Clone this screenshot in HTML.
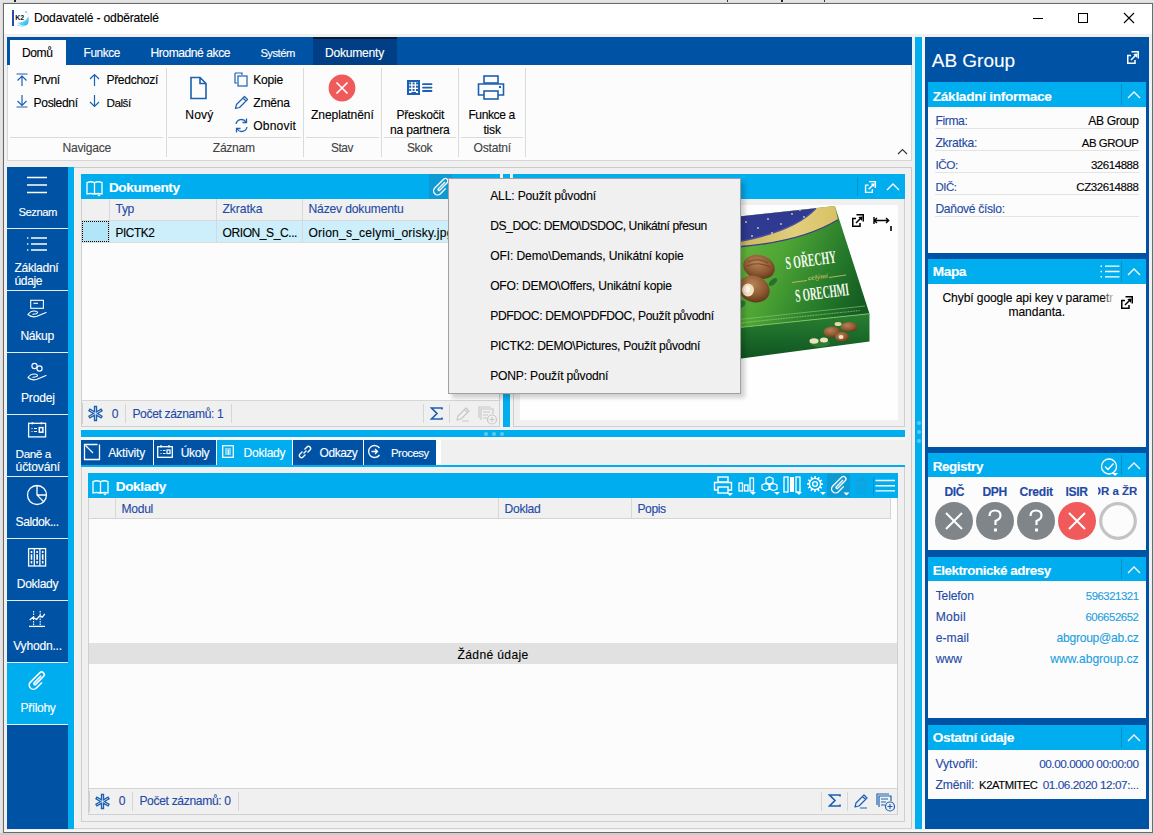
<!DOCTYPE html>
<html><head><meta charset="utf-8">
<style>
html,body{margin:0;padding:0;}
body{width:1154px;height:835px;position:relative;overflow:hidden;background:#e6e6e6;font-family:"Liberation Sans",sans-serif;}
body>div{position:absolute;}
.t{position:absolute;white-space:nowrap;-webkit-text-stroke:0.12px currentColor;}
</style></head><body>
<div style="left:0px;top:0px;width:1154px;height:835px;background:#e4e4e4;"></div>
<div style="left:14px;top:0px;width:2px;height:2px;background:#222;"></div>
<div style="left:727px;top:0px;width:1px;height:2px;background:#333;"></div>
<div style="left:781px;top:0px;width:2px;height:2px;background:#222;"></div>
<div style="left:824px;top:0px;width:1px;height:2px;background:#333;"></div>
<div style="left:2px;top:2px;width:1152px;height:832px;background:#dadada;"></div>
<div style="left:3px;top:3px;width:1150px;height:830px;background:#6a6a6a;"></div>
<div style="left:4px;top:4px;width:1148px;height:828px;background:#f0f0f0;"></div>
<div style="left:4px;top:4px;width:1148px;height:30px;background:#ffffff;"></div>
<div style="left:12px;top:10px;width:2px;height:16px;background:#1f4fa8;"></div>
<svg style="position:absolute;left:14px;top:9px;" width="16" height="18" viewBox="0 0 16 18"><defs><linearGradient id="k2g" x1="0" y1="0" x2="1" y2="1"><stop offset="0" stop-color="#e8f7fd"/><stop offset="0.6" stop-color="#5fd0f2"/><stop offset="1" stop-color="#1aa3e6"/></linearGradient></defs><path d="M3.5 14 Q9 18.5 13.5 15.5 Q15.5 12.5 14.2 7 Q12.5 11.5 9 12.5 Q6 13.2 3.5 14Z" fill="url(#k2g)"/><path d="M3 16 Q8 18 12 16.5" stroke="#8fdcf5" stroke-width="1" fill="none"/><text x="1.3" y="11.3" font-family="Liberation Sans" font-weight="bold" font-size="7" fill="#111">K2</text><circle cx="12" cy="3" r="0.9" fill="#6cc8f0"/><circle cx="13.5" cy="5" r="0.6" fill="#9cd8f5"/></svg>
<div class="t" style="left:34.00px;top:12px;font-size:12.10px;line-height:12.10px;color:#000;font-weight:normal;letter-spacing:-0.183px;">Dodavatelé - odběratelé</div>
<div style="left:1033px;top:18px;width:10px;height:1px;background:#000;"></div>
<div style="left:1078px;top:13px;width:10px;height:10px;background:transparent;border:1px solid #000;box-sizing:border-box;"></div>
<svg style="position:absolute;left:1123px;top:12px;" width="12" height="12" viewBox="0 0 12 12"><path d="M1 1 L11 11 M11 1 L1 11" stroke="#000" stroke-width="1.1"/></svg>
<div style="left:7px;top:37px;width:905px;height:28px;background:#0052a4;"></div>
<div style="left:7px;top:65px;width:905px;height:96px;background:#fcfcfc;border:1px solid #d6d6d6;border-top:none;box-sizing:border-box;"></div>
<div style="left:10px;top:40px;width:56px;height:26px;background:#fcfcfc;"></div>
<div class="t" style="left:22.00px;top:47px;font-size:12.10px;line-height:12.10px;color:#000;font-weight:normal;letter-spacing:-0.438px;">Domů</div>
<div class="t" style="left:83.60px;top:48px;font-size:11.86px;line-height:11.86px;color:#fff;font-weight:normal;letter-spacing:-0.451px;">Funkce</div>
<div class="t" style="left:150.50px;top:47px;font-size:12.10px;line-height:12.10px;color:#fff;font-weight:normal;letter-spacing:-0.448px;">Hromadné akce</div>
<div class="t" style="left:260.40px;top:48px;font-size:11.27px;line-height:11.27px;color:#fff;font-weight:normal;letter-spacing:-0.530px;">Systém</div>
<div style="left:313px;top:37px;width:84px;height:28px;background:#003f86;"></div>
<div style="left:313px;top:37px;width:84px;height:2px;background:#0a1a33;"></div>
<div class="t" style="left:325.00px;top:47px;font-size:12.10px;line-height:12.10px;color:#fff;font-weight:normal;letter-spacing:-0.238px;">Dokumenty</div>
<div style="left:166px;top:68px;width:1px;height:89px;background:#dadada;"></div>
<div style="left:303px;top:68px;width:1px;height:89px;background:#dadada;"></div>
<div style="left:381px;top:68px;width:1px;height:89px;background:#dadada;"></div>
<div style="left:458px;top:68px;width:1px;height:89px;background:#dadada;"></div>
<div style="left:525px;top:68px;width:1px;height:89px;background:#dadada;"></div>
<div style="left:10px;top:137px;width:153px;height:1px;background:#dadada;"></div>
<div style="left:168px;top:137px;width:133px;height:1px;background:#dadada;"></div>
<div style="left:306px;top:137px;width:73px;height:1px;background:#dadada;"></div>
<div style="left:384px;top:137px;width:72px;height:1px;background:#dadada;"></div>
<div style="left:461px;top:137px;width:62px;height:1px;background:#dadada;"></div>
<div class="t" style="left:62.60px;top:142px;font-size:12.10px;line-height:12.10px;color:#444;font-weight:normal;letter-spacing:-0.249px;">Navigace</div>
<div class="t" style="left:212.80px;top:142px;font-size:12.10px;line-height:12.10px;color:#444;font-weight:normal;letter-spacing:-0.295px;">Záznam</div>
<div class="t" style="left:331.00px;top:143px;font-size:11.89px;line-height:11.89px;color:#444;font-weight:normal;letter-spacing:-0.449px;">Stav</div>
<div class="t" style="left:407.00px;top:142px;font-size:12.05px;line-height:12.05px;color:#444;font-weight:normal;letter-spacing:-0.449px;">Skok</div>
<div class="t" style="left:473.50px;top:142px;font-size:12.10px;line-height:12.10px;color:#444;font-weight:normal;letter-spacing:-0.210px;">Ostatní</div>
<svg style="position:absolute;left:16px;top:73px;" width="12" height="13" viewBox="0 0 12 13"><path d="M0.5 1 H11.5 M6 2.5 V13 M1.5 7.5 L6 3 L10.5 7.5" stroke="#1d5fb0" stroke-width="1.2" fill="none"/></svg>
<div class="t" style="left:33.60px;top:74px;font-size:12.10px;line-height:12.10px;color:#000;font-weight:normal;letter-spacing:-0.444px;">První</div>
<svg style="position:absolute;left:16px;top:95px;" width="12" height="13" viewBox="0 0 12 13"><path d="M0.5 12 H11.5 M6 0 V10.5 M1.5 6 L6 10.5 L10.5 6" stroke="#1d5fb0" stroke-width="1.2" fill="none"/></svg>
<div class="t" style="left:33.60px;top:97px;font-size:12.10px;line-height:12.10px;color:#000;font-weight:normal;letter-spacing:-0.379px;">Poslední</div>
<svg style="position:absolute;left:89px;top:73px;" width="11" height="13" viewBox="0 0 11 13"><path d="M5.5 1.5 V13 M1 6 L5.5 1.5 L10 6" stroke="#1d5fb0" stroke-width="1.2" fill="none"/></svg>
<div class="t" style="left:106.40px;top:74px;font-size:12.10px;line-height:12.10px;color:#000;font-weight:normal;letter-spacing:-0.314px;">Předchozí</div>
<svg style="position:absolute;left:89px;top:95px;" width="11" height="13" viewBox="0 0 11 13"><path d="M5.5 0 V11.5 M1 7 L5.5 11.5 L10 7" stroke="#1d5fb0" stroke-width="1.2" fill="none"/></svg>
<div class="t" style="left:106.40px;top:97px;font-size:11.70px;line-height:11.70px;color:#000;font-weight:normal;letter-spacing:-0.445px;">Další</div>
<svg style="position:absolute;left:189px;top:76px;" width="19" height="24" viewBox="0 0 19 24"><path d="M2 1.5 H11 L17 7.5 V22.5 H2 Z M11 1.5 V7.5 H17" stroke="#1d5fb0" stroke-width="1.6" fill="none" stroke-linejoin="miter"/></svg>
<div class="t" style="left:185.30px;top:109px;font-size:12.10px;line-height:12.10px;color:#000;font-weight:normal;letter-spacing:0.138px;">Nový</div>
<svg style="position:absolute;left:234px;top:72px;" width="15" height="15" viewBox="0 0 15 15"><path d="M1 1 H8 V3 M1 1 V11 H3" stroke="#1d5fb0" stroke-width="1.2" fill="none"/><rect x="4" y="4" width="9" height="10" stroke="#1d5fb0" stroke-width="1.2" fill="none"/></svg>
<div class="t" style="left:253.30px;top:74px;font-size:12.10px;line-height:12.10px;color:#000;font-weight:normal;letter-spacing:-0.241px;">Kopie</div>
<svg style="position:absolute;left:234px;top:95px;" width="15" height="15" viewBox="0 0 15 15"><path d="M1.5 13.5 L2.5 9.5 L10.5 1.5 L13.5 4.5 L5.5 12.5 Z M9 3 L12 6" stroke="#1d5fb0" stroke-width="1.2" fill="none" stroke-linejoin="round"/></svg>
<div class="t" style="left:253.30px;top:97px;font-size:12.10px;line-height:12.10px;color:#000;font-weight:normal;letter-spacing:-0.265px;">Změna</div>
<svg style="position:absolute;left:234px;top:118px;" width="15" height="15" viewBox="0 0 15 15"><path d="M2 6 A5.5 5.5 0 0 1 12 4 M13 9 A5.5 5.5 0 0 1 3 11" stroke="#1d5fb0" stroke-width="1.3" fill="none"/><path d="M12.5 0.5 V4.5 H8.5" stroke="#1d5fb0" stroke-width="1.3" fill="none"/><path d="M2.5 14.5 V10.5 H6.5" stroke="#1d5fb0" stroke-width="1.3" fill="none"/></svg>
<div class="t" style="left:253.30px;top:120px;font-size:12.10px;line-height:12.10px;color:#000;font-weight:normal;letter-spacing:0.149px;">Obnovit</div>
<svg style="position:absolute;left:328px;top:74px;" width="28" height="28" viewBox="0 0 28 28"><circle cx="14" cy="14" r="13.4" fill="#ef5b5b"/><path d="M8.5 8.5 L19.5 19.5 M19.5 8.5 L8.5 19.5" stroke="#fff" stroke-width="1.6"/></svg>
<div class="t" style="left:311.00px;top:109px;font-size:12.10px;line-height:12.10px;color:#000;font-weight:normal;letter-spacing:-0.103px;">Zneplatnění</div>
<svg style="position:absolute;left:406px;top:79px;" width="27" height="17" viewBox="0 0 27 17"><rect x="2" y="2" width="11" height="13" fill="none" stroke="#1d5fb0" stroke-width="2"/><rect x="3.2" y="3.4" width="2" height="2" fill="#1d5fb0"/><rect x="3.2" y="6.7" width="2" height="2" fill="#1d5fb0"/><rect x="3.2" y="10.0" width="2" height="2" fill="#1d5fb0"/><rect x="6.6" y="3.4" width="2" height="2" fill="#1d5fb0"/><rect x="6.6" y="6.7" width="2" height="2" fill="#1d5fb0"/><rect x="6.6" y="10.0" width="2" height="2" fill="#1d5fb0"/><rect x="10.0" y="3.4" width="2" height="2" fill="#1d5fb0"/><rect x="10.0" y="6.7" width="2" height="2" fill="#1d5fb0"/><rect x="10.0" y="10.0" width="2" height="2" fill="#1d5fb0"/><rect x="5.5" y="13" width="4.5" height="3" fill="#1d5fb0"/><path d="M17 5.2 H25.5 M17 8.6 H25.5 M17 12 H25.5" stroke="#1d5fb0" stroke-width="1.8" stroke-linecap="round"/></svg>
<div class="t" style="left:396.50px;top:109px;font-size:12.10px;line-height:12.10px;color:#000;font-weight:normal;letter-spacing:-0.247px;">Přeskočit</div>
<div class="t" style="left:390.00px;top:124px;font-size:12.10px;line-height:12.10px;color:#000;font-weight:normal;letter-spacing:-0.219px;">na partnera</div>
<svg style="position:absolute;left:477px;top:75px;" width="29" height="26" viewBox="0 0 29 26"><rect x="7" y="1" width="14" height="7" fill="none" stroke="#1d5fb0" stroke-width="1.6"/><path d="M7 20 H1.5 V9 H26.5 V20 H21" fill="none" stroke="#1d5fb0" stroke-width="1.6"/><rect x="7" y="16" width="14" height="8" fill="none" stroke="#1d5fb0" stroke-width="1.6"/><rect x="22" y="11" width="2" height="2" fill="#1d5fb0"/></svg>
<div class="t" style="left:468.40px;top:109px;font-size:12.10px;line-height:12.10px;color:#000;font-weight:normal;letter-spacing:-0.415px;">Funkce a</div>
<div class="t" style="left:483.40px;top:124px;font-size:12.10px;line-height:12.10px;color:#000;font-weight:normal;letter-spacing:-0.185px;">tisk</div>
<svg style="position:absolute;left:897px;top:148px;" width="11" height="7" viewBox="0 0 11 7"><path d="M1 6 L5.5 1.5 L10 6" stroke="#333" stroke-width="1.1" fill="none"/></svg>
<div style="left:7px;top:167px;width:67px;height:662px;background:#0052a4;"></div>
<div style="left:68px;top:167px;width:6px;height:662px;background:#00adef;"></div>
<div style="left:7px;top:663px;width:61px;height:61px;background:#00adef;"></div>
<div style="left:7px;top:228px;width:61px;height:1px;background:#e8eef7;"></div>
<div style="left:7px;top:290px;width:61px;height:1px;background:#e8eef7;"></div>
<div style="left:7px;top:352px;width:61px;height:1px;background:#e8eef7;"></div>
<div style="left:7px;top:414px;width:61px;height:1px;background:#e8eef7;"></div>
<div style="left:7px;top:476px;width:61px;height:1px;background:#e8eef7;"></div>
<div style="left:7px;top:538px;width:61px;height:1px;background:#e8eef7;"></div>
<div style="left:7px;top:600px;width:61px;height:1px;background:#e8eef7;"></div>
<div style="left:7px;top:662px;width:61px;height:1px;background:#e8eef7;"></div>
<div style="left:7px;top:724px;width:61px;height:1px;background:#e8eef7;"></div>
<svg style="position:absolute;left:26px;top:176px;" width="22" height="18" viewBox="0 0 22 18"><path d="M1 1.5 H21 M1 9 H21 M1 16.5 H21" stroke="#fff" stroke-width="1.3"/></svg>
<div class="t" style="left:18.40px;top:207px;font-size:11.27px;line-height:11.27px;color:#ffffff;font-weight:normal;letter-spacing:-0.474px;">Seznam</div>
<svg style="position:absolute;left:26px;top:236px;" width="22" height="16" viewBox="0 0 22 16"><path d="M5 2 H21 M5 8 H21 M5 14 H21" stroke="#fff" stroke-width="1.3"/><rect x="1" y="1.3" width="1.4" height="1.4" fill="#fff"/><rect x="1" y="7.3" width="1.4" height="1.4" fill="#fff"/><rect x="1" y="13.3" width="1.4" height="1.4" fill="#fff"/></svg>
<div class="t" style="left:14.40px;top:262px;font-size:12.10px;line-height:12.10px;color:#ffffff;font-weight:normal;letter-spacing:-0.295px;">Základní</div>
<div class="t" style="left:14.40px;top:275px;font-size:12.10px;line-height:12.10px;color:#ffffff;font-weight:normal;letter-spacing:-0.352px;">údaje</div>
<svg style="position:absolute;left:26px;top:299px;" width="22" height="20" viewBox="0 0 22 20"><rect x="4.7" y="1.3" width="12.7" height="8" fill="none" stroke="#fff" stroke-width="1.1"/><path d="M7.5 4.3 H12" stroke="#fff" stroke-width="1.1"/><path d="M2 15.5 C4 12.5 7 11.5 10 12.2 C12 12.7 12 14 10 14.8 L7 15.3 M2 15.5 C4 17.5 8 18.2 11 17.2 L20 13.5" fill="none" stroke="#fff" stroke-width="1.15" stroke-linecap="round" stroke-linejoin="round"/></svg>
<div class="t" style="left:20.40px;top:330px;font-size:12.10px;line-height:12.10px;color:#ffffff;font-weight:normal;letter-spacing:-0.287px;">Nákup</div>
<svg style="position:absolute;left:26px;top:361px;" width="22" height="22" viewBox="0 0 22 22"><circle cx="8.5" cy="5" r="2.6" fill="none" stroke="#fff" stroke-width="1.15"/><circle cx="13.5" cy="7.5" r="2.6" fill="none" stroke="#fff" stroke-width="1.15"/><g transform="translate(0 1)"><path d="M2 15.5 C4 12.5 7 11.5 10 12.2 C12 12.7 12 14 10 14.8 L7 15.3 M2 15.5 C4 17.5 8 18.2 11 17.2 L20 13.5" fill="none" stroke="#fff" stroke-width="1.15" stroke-linecap="round" stroke-linejoin="round"/></g></svg>
<div class="t" style="left:21.00px;top:392px;font-size:12.10px;line-height:12.10px;color:#ffffff;font-weight:normal;letter-spacing:-0.223px;">Prodej</div>
<svg style="position:absolute;left:27px;top:422px;" width="20" height="16" viewBox="0 0 20 16"><rect x="1.6" y="1.3" width="17" height="13.6" fill="none" stroke="#fff" stroke-width="1.3"/><rect x="4.6" y="0.3" width="1.6" height="2" fill="#fff"/><rect x="13.6" y="0.3" width="1.6" height="2" fill="#fff"/><path d="M4.5 6.5 H5.5 M4.5 9.5 H5.5 M7 6.5 H10 M7 9.5 H10" stroke="#fff" stroke-width="1.2"/><rect x="12.3" y="5.6" width="3.6" height="4.6" fill="none" stroke="#fff" stroke-width="1.5"/></svg>
<div class="t" style="left:15.60px;top:448px;font-size:11.75px;line-height:11.75px;color:#ffffff;font-weight:normal;letter-spacing:-0.446px;">Daně a</div>
<div class="t" style="left:15.60px;top:461px;font-size:12.10px;line-height:12.10px;color:#ffffff;font-weight:normal;letter-spacing:-0.173px;">účtování</div>
<svg style="position:absolute;left:26px;top:484px;" width="22" height="22" viewBox="0 0 22 22"><circle cx="11" cy="11" r="9.5" fill="none" stroke="#fff" stroke-width="1.3"/><path d="M11 1.5 V11 L17.7 17.7 M11 11 H20.5" fill="none" stroke="#fff" stroke-width="1.3"/></svg>
<div class="t" style="left:15.60px;top:516px;font-size:12.10px;line-height:12.10px;color:#ffffff;font-weight:normal;letter-spacing:-0.437px;">Saldok...</div>
<svg style="position:absolute;left:27px;top:547px;" width="20" height="20" viewBox="0 0 20 20"><rect x="1.6" y="1.6" width="17" height="17.4" fill="none" stroke="#fff" stroke-width="1.3"/><path d="M7.3 1.6 V19 M12.9 1.6 V19" stroke="#fff" stroke-width="1.2"/><path d="M4.5 4 V16.5 M10.1 4 V16.5 M15.7 4 V16.5" stroke="#fff" stroke-width="1.6" stroke-dasharray="2 1.2 5.5 1.2 3 10"/></svg>
<div class="t" style="left:16.80px;top:578px;font-size:12.10px;line-height:12.10px;color:#ffffff;font-weight:normal;letter-spacing:-0.325px;">Doklady</div>
<svg style="position:absolute;left:27px;top:609px;" width="20" height="20" viewBox="0 0 20 20"><path d="M6.6 2 V16 M13.2 2 V16" stroke="#fff" stroke-width="1.1" stroke-dasharray="1.5 1"/><path d="M2.7 11 L6 8.3 L9.5 10.5 L12.9 6.6 L15.2 8.3 L17.8 4.9" fill="none" stroke="#fff" stroke-width="1.3" stroke-linejoin="round"/><path d="M2 17.4 H18" stroke="#fff" stroke-width="1.3"/></svg>
<div class="t" style="left:13.20px;top:640px;font-size:12.10px;line-height:12.10px;color:#ffffff;font-weight:normal;letter-spacing:-0.223px;">Vyhodn...</div>
<svg style="position:absolute;left:25px;top:669px;" width="24" height="24" viewBox="0 0 24 24"><path d="M16.5 10 V17.5 A4 4 0 0 1 8.5 17.5 V5 A2.5 2.5 0 0 1 13.5 5 V15.5 A1 1 0 0 1 11.5 15.5 V6" fill="none" stroke="#fff" stroke-width="1.5" transform="translate(12.5 12) scale(1.05) rotate(45) translate(-12.5 -12)"/></svg>
<div class="t" style="left:20.50px;top:702px;font-size:12.10px;line-height:12.10px;color:#ffffff;font-weight:normal;letter-spacing:-0.389px;">Přílohy</div>
<div style="left:74px;top:167px;width:838px;height:661px;background:#f0f0f0;"></div>
<div style="left:74px;top:167px;width:838px;height:1px;background:#cccccc;"></div>
<div style="left:74px;top:168px;width:1px;height:660px;background:#fbfbfb;"></div>
<div style="left:911px;top:167px;width:1px;height:661px;background:#c8c8c8;"></div>
<div style="left:74px;top:828px;width:838px;height:1px;background:#d0d0d0;"></div>
<div style="left:81px;top:174px;width:419px;height:253px;background:#fcfcfc;border:1px solid #cfcfcf;box-sizing:border-box;"></div>
<div style="left:81px;top:174px;width:419px;height:25px;background:#00adef;"></div>
<svg style="position:absolute;left:86px;top:181px;" width="18" height="16" viewBox="0 0 18 16"><path d="M1 1.5 Q4.5 0 8.5 1.5 V13 Q4.5 12 1 13 Z M8.5 1.5 Q12.5 0 16 1.5 V13 Q12.5 12 8.5 13" fill="none" stroke="#fff" stroke-width="1.3"/><path d="M11 13.5 H15 L13 15.5 Z" fill="#fff"/></svg>
<div class="t" style="left:108.90px;top:181px;font-size:13.68px;line-height:13.68px;color:#fff;font-weight:bold;letter-spacing:-0.404px;">Dokumenty</div>
<div style="left:429px;top:174px;width:23px;height:25px;background:#0f9ad3;"></div>
<svg style="position:absolute;left:428.5px;top:175px;" width="24" height="24" viewBox="0 0 24 24"><path d="M16.5 10 V17.5 A4 4 0 0 1 8.5 17.5 V5 A2.5 2.5 0 0 1 13.5 5 V15.5 A1 1 0 0 1 11.5 15.5 V6" fill="none" stroke="#fff" stroke-width="1.3" transform="rotate(45 12.5 12)"/></svg>
<div style="left:82px;top:199px;width:417px;height:21px;background:#f0f0f0;"></div>
<div style="left:82px;top:220px;width:417px;height:1px;background:#d8d8d8;"></div>
<div style="left:109px;top:199px;width:1px;height:21px;background:#d8d8d8;"></div>
<div style="left:216px;top:199px;width:1px;height:21px;background:#d8d8d8;"></div>
<div style="left:302px;top:199px;width:1px;height:21px;background:#d8d8d8;"></div>
<div class="t" style="left:115.50px;top:203px;font-size:12.10px;line-height:12.10px;color:#1f4aa6;font-weight:normal;letter-spacing:-0.328px;">Typ</div>
<div class="t" style="left:222.50px;top:203px;font-size:12.10px;line-height:12.10px;color:#1f4aa6;font-weight:normal;letter-spacing:-0.045px;">Zkratka</div>
<div class="t" style="left:308.50px;top:203px;font-size:12.10px;line-height:12.10px;color:#1f4aa6;font-weight:normal;letter-spacing:-0.161px;">Název dokumentu</div>
<div style="left:82px;top:221px;width:417px;height:21px;background:#cdeffb;"></div>
<div style="left:82px;top:242px;width:417px;height:1px;background:#dcdcdc;"></div>
<div style="left:82px;top:221px;width:27px;height:21px;background:#b3e5f9;outline:1px dotted #000;outline-offset:-1px;"></div>
<div style="left:109px;top:221px;width:1px;height:21px;background:#d8d8d8;"></div>
<div style="left:216px;top:221px;width:1px;height:21px;background:#d8d8d8;"></div>
<div style="left:302px;top:221px;width:1px;height:21px;background:#d8d8d8;"></div>
<div class="t" style="left:115.50px;top:228px;font-size:11.85px;line-height:11.85px;color:#000;font-weight:normal;letter-spacing:-0.447px;">PICTK2</div>
<div class="t" style="left:222.50px;top:227px;font-size:12.08px;line-height:12.08px;color:#000;font-weight:normal;letter-spacing:-0.448px;">ORION_S_C...</div>
<div class="t" style="left:308.50px;top:227px;font-size:12.10px;line-height:12.10px;color:#000;font-weight:normal;letter-spacing:0.192px;">Orion_s_celymi_orisky.jpg</div>
<div style="left:82px;top:400px;width:417px;height:26px;background:#f0f0f0;"></div>
<div style="left:82px;top:400px;width:417px;height:1px;background:#d6d6d6;"></div>
<svg style="position:absolute;left:87px;top:405px;" width="17" height="17" viewBox="0 0 17 17"><polygon points="9.50,15.50 7.50,15.50 7.50,10.23 2.94,12.87 1.94,11.13 6.50,8.50 1.94,5.87 2.94,4.13 7.50,6.77 7.50,1.50 9.50,1.50 9.50,6.77 14.06,4.13 15.06,5.87 10.50,8.50 15.06,11.13 14.06,12.87 9.50,10.23" fill="#f6f6f6" stroke="#1d5fb0" stroke-width="1.35" stroke-linejoin="miter" stroke-miterlimit="10"/></svg>
<div class="t" style="left:111.70px;top:408px;font-size:12.10px;line-height:12.10px;color:#1f4aa6;font-weight:normal;letter-spacing:-0.219px;">0</div>
<div style="left:82px;top:403px;width:1px;height:21px;background:#cfcfcf;"></div>
<div style="left:125px;top:404px;width:1px;height:19px;background:#d6d6d6;"></div>
<div class="t" style="left:132.40px;top:408px;font-size:12.10px;line-height:12.10px;color:#1f4aa6;font-weight:normal;letter-spacing:-0.366px;">Počet záznamů: 1</div>
<div style="left:231px;top:404px;width:1px;height:19px;background:#d6d6d6;"></div>
<div style="left:423px;top:404px;width:1px;height:19px;background:#d6d6d6;"></div>
<div style="left:449px;top:404px;width:1px;height:19px;background:#d6d6d6;"></div>
<svg style="position:absolute;left:430px;top:407px;" width="14" height="14" viewBox="0 0 14 14"><path d="M12 2.5 V1 H1.5 L7 6.5 L1.5 12 H12 V10.5" fill="none" stroke="#1d5fb0" stroke-width="1.6"/></svg>
<svg style="position:absolute;left:455px;top:406px;" width="16" height="16" viewBox="0 0 16 16"><path d="M2 14 L3 10 L11 2 L14 5 L6 13 Z M9.5 3.5 L12.5 6.5 M7 15 H14" fill="none" stroke="#c8c8c8" stroke-width="1.2" stroke-linejoin="round"/></svg>
<svg style="position:absolute;left:476px;top:404px;" width="22" height="21" viewBox="0 0 22 21"><path d="M3 14 V3 H15 M5 16 V5 H17 V10" fill="none" stroke="#c8c8c8" stroke-width="1.2"/><path d="M7 8 H14 M7 11 H12 M7 14 H11" stroke="#c8c8c8" stroke-width="1.1"/><circle cx="16" cy="15.5" r="4.5" fill="#f0f0f0" stroke="#c8c8c8" stroke-width="1.2"/><path d="M16 13 V18 M13.5 15.5 H18.5" stroke="#c8c8c8" stroke-width="1.1"/></svg>
<div style="left:503px;top:174px;width:7px;height:253px;background:#00adef;"></div>
<div style="left:513px;top:174px;width:392px;height:253px;background:#f0f0f0;border:1px solid #cfcfcf;box-sizing:border-box;"></div>
<div style="left:513px;top:174px;width:392px;height:25px;background:#00adef;"></div>
<div style="left:857px;top:177px;width:1px;height:19px;background:#0a8fc6;"></div>
<svg style="position:absolute;left:862.5px;top:180px" width="14" height="14" viewBox="0 0 15 15"><path d="M6 5.5 H2.75 V13.25 H10 V10" fill="none" stroke="#fff" stroke-width="1.5"/><path d="M6.5 1.75 H13.25 V8.5" fill="none" stroke="#fff" stroke-width="1.5"/><path d="M6 10 L11.2 4.8" stroke="#fff" stroke-width="1.5"/><path d="M12.6 3.4 L8.3 4.1 L11.9 7.7 Z" fill="#fff"/></svg>
<svg style="position:absolute;left:885.5px;top:183px;" width="14" height="8" viewBox="0 0 14 8"><path d="M1 7 L7 1 L13 7" fill="none" stroke="#fff" stroke-width="1.3"/></svg>
<div style="left:520px;top:205px;width:378px;height:215px;background:#fefefe;"></div>
<svg style="position:absolute;left:849.5px;top:212.5px;" width="15" height="15" viewBox="0 0 15 15"><path d="M6 5.5 H2.75 V13.25 H10 V10" fill="none" stroke="#000" stroke-width="1.5"/><path d="M6.5 1.75 H13.25 V8.5" fill="none" stroke="#000" stroke-width="1.5"/><path d="M6 10 L11.2 4.8" stroke="#000" stroke-width="1.5"/><path d="M12.6 3.4 L8.3 4.1 L11.9 7.7 Z" fill="#000"/></svg>
<svg style="position:absolute;left:873px;top:216px;" width="20" height="16" viewBox="0 0 20 16"><path d="M1 1 V8 M1 4.5 H16 M4 2 L1.3 4.5 L4 7 M13 2 L15.7 4.5 L13 7" fill="none" stroke="#000" stroke-width="1.4"/><path d="M18 10 V15" stroke="#000" stroke-width="1.6"/></svg>
<svg style="position:absolute;left:730px;top:200px;" width="145" height="165" viewBox="0 0 145 165"><defs><linearGradient id="gtop" x1="0" y1="0.3" x2="1" y2="0.7"><stop offset="0" stop-color="#67b93c"/><stop offset="0.35" stop-color="#4ea534"/><stop offset="0.75" stop-color="#23772a"/><stop offset="1" stop-color="#145a22"/></linearGradient><linearGradient id="gfront" x1="0" y1="0" x2="0" y2="1"><stop offset="0" stop-color="#2a7f30"/><stop offset="0.5" stop-color="#1b6a2a"/><stop offset="1" stop-color="#0f5220"/></linearGradient><linearGradient id="ggold" x1="0" y1="0" x2="1" y2="0"><stop offset="0" stop-color="#c8b057"/><stop offset="0.6" stop-color="#e2cf7c"/><stop offset="1" stop-color="#d9c066"/></linearGradient><radialGradient id="choc" cx="0.4" cy="0.35" r="0.7"><stop offset="0" stop-color="#b98356"/><stop offset="0.6" stop-color="#8e5a33"/><stop offset="1" stop-color="#5e3519"/></radialGradient></defs><polygon points="0.0,17.5 104.9,5.9 139.5,113.7 0.0,128.5" fill="url(#gtop)"/><polygon points="0.0,128.5 139.5,113.7 139.5,141.4 0.0,160.0" fill="url(#gfront)"/><path d="M0.0,128.5 L139.5,113.7" stroke="#7cc060" stroke-width="1"/><path d="M0.0,120.5 L135.0,106.0" stroke="#8fcf6a" stroke-width="0.6"/><path d="M5.0,123.5 L130.0,110.5" stroke="#b8e0a0" stroke-width="1.2" stroke-dasharray="1 0.6" opacity="0.55"/><path d="M0.0,17.5 L104.9,5.9 L107.9,19.8 Q70.0,43.0 0.0,47.5 Z" fill="url(#ggold)"/><path d="M107.9,19.8 Q70.0,43.0 0.0,47.5" stroke="#3b3f8a" stroke-width="1.3" fill="none"/><path d="M0.0,17.5 L86.0,8.3 Q63.0,33.0 0.0,43.0 Z" fill="#2f3a92"/><path d="M86.0,8.3 Q63.0,33.0 0.0,43.0" stroke="#4a4fa0" stroke-width="1.5" fill="none"/><circle cx="16" cy="22" r="0.9" fill="#dcd0a0"/><circle cx="28" cy="28" r="0.9" fill="#dcd0a0"/><circle cx="38" cy="19" r="0.9" fill="#dcd0a0"/><circle cx="51" cy="24" r="0.9" fill="#dcd0a0"/><circle cx="62" cy="14" r="0.9" fill="#dcd0a0"/><circle cx="74" cy="17" r="0.9" fill="#dcd0a0"/><circle cx="22" cy="36" r="0.9" fill="#dcd0a0"/><circle cx="42" cy="33" r="0.9" fill="#dcd0a0"/><circle cx="58" cy="30" r="0.9" fill="#dcd0a0"/><circle cx="70" cy="10" r="0.9" fill="#dcd0a0"/><ellipse cx="29" cy="67" rx="16" ry="12" fill="url(#choc)" transform="rotate(15 29 67)"/><path d="M18.0,62.0 Q28.0,57.0 38.0,63.0 M17.0,66.0 Q28.0,61.0 40.0,67.0" stroke="#6a3f20" stroke-width="0.8" fill="none"/><ellipse cx="24" cy="89" rx="16" ry="13" fill="url(#choc)" transform="rotate(20 24 89)"/><ellipse cx="18" cy="90" rx="6" ry="6.5" fill="#f2e4c0"/><ellipse cx="17" cy="89" rx="3" ry="3.5" fill="#fff8e8"/><ellipse cx="8" cy="105" rx="8" ry="4" fill="#2e7a36" transform="rotate(-20 8 105)"/><ellipse cx="43" cy="82" rx="5" ry="2.5" fill="#2b6e2e" transform="rotate(-40 43 82)"/><g transform="rotate(-7.5 81 62)"><text x="81" y="66" font-family="Liberation Serif" font-size="18" font-weight="bold" fill="#f4faee" text-anchor="middle" textLength="51" lengthAdjust="spacingAndGlyphs">S OŘECHY</text></g><g transform="rotate(-7.5 88 78)"><text x="88" y="79" font-family="Liberation Serif" font-style="italic" font-size="6.5" fill="#e6d37a" text-anchor="middle" textLength="20" lengthAdjust="spacingAndGlyphs">celými</text></g><path d="M62.0,82.5 L77.0,80.5 M99.0,77.5 L116.0,75.0" stroke="#d8c070" stroke-width="0.8"/><g transform="rotate(-7.5 92 92)"><text x="92" y="98.5" font-family="Liberation Serif" font-size="18" font-weight="bold" fill="#f4faee" text-anchor="middle" textLength="54" lengthAdjust="spacingAndGlyphs">S ORECHMI</text></g><ellipse cx="90" cy="143" rx="10" ry="4" fill="#2f7a34"/><ellipse cx="102" cy="132" rx="8.5" ry="5.5" fill="url(#choc)"/><ellipse cx="119" cy="127" rx="8.5" ry="5" fill="url(#choc)"/><ellipse cx="112" cy="137" rx="7" ry="5" fill="url(#choc)"/><ellipse cx="111" cy="137" rx="2.5" ry="2" fill="#f3e7c8"/><ellipse cx="84" cy="141" rx="4.5" ry="2.8" fill="#efe3bf"/><ellipse cx="94" cy="140" rx="4" ry="2.5" fill="#efe3bf"/><ellipse cx="108" cy="124" rx="3.5" ry="2" fill="#e8d8a8"/></svg>
<div style="left:81px;top:430px;width:824px;height:7px;background:#00adef;"></div>
<div style="left:483.7px;top:431.5px;width:4px;height:4px;border-radius:2px;background:#5ccaf3"></div>
<div style="left:491.6px;top:431.5px;width:4px;height:4px;border-radius:2px;background:#5ccaf3"></div>
<div style="left:499.6px;top:431.5px;width:4px;height:4px;border-radius:2px;background:#5ccaf3"></div>
<div style="left:81px;top:437px;width:824px;height:3px;background:#f8f6f6;"></div>
<div style="left:81px;top:440px;width:355px;height:25px;background:#0052a4;"></div>
<div style="left:216px;top:440px;width:77px;height:25px;background:#00adef;"></div>
<div style="left:153px;top:440px;width:1px;height:25px;background:#ffffff;"></div>
<div style="left:216px;top:440px;width:1px;height:25px;background:#ffffff;"></div>
<div style="left:292px;top:440px;width:1px;height:25px;background:#ffffff;"></div>
<div style="left:363px;top:440px;width:1px;height:25px;background:#ffffff;"></div>
<div style="left:436px;top:440px;width:5px;height:25px;background:#ffffff;"></div>
<div style="left:81px;top:465px;width:824px;height:2px;background:#00adef;"></div>
<svg style="position:absolute;left:83px;top:443px;" width="18" height="18" viewBox="0 0 18 18"><rect x="1.5" y="1.5" width="15" height="15" fill="none" stroke="#fff" stroke-width="1.3" stroke-dasharray="13 2 100"/><path d="M2.5 2.5 L10 10" stroke="#fff" stroke-width="1.2"/></svg>
<div class="t" style="left:108.20px;top:447px;font-size:12.10px;line-height:12.10px;color:#fff;font-weight:normal;letter-spacing:-0.162px;">Aktivity</div>
<svg style="position:absolute;left:157px;top:445px;" width="16" height="13" viewBox="0 0 16 13"><rect x="0.7" y="1.7" width="14.6" height="10.6" fill="none" stroke="#fff" stroke-width="1.3"/><path d="M4 0 V2.5 M12 0 V2.5" stroke="#fff" stroke-width="1.2"/><path d="M3.5 5.5 H4.5 M3.5 8.5 H4.5 M6 5.5 H8.5 M6 8.5 H8.5" stroke="#fff" stroke-width="1.1"/><rect x="10" y="5" width="3" height="3.5" fill="none" stroke="#fff" stroke-width="1.2"/></svg>
<div class="t" style="left:180.70px;top:447px;font-size:12.10px;line-height:12.10px;color:#fff;font-weight:normal;letter-spacing:-0.327px;">Úkoly</div>
<svg style="position:absolute;left:222px;top:445px;" width="12" height="13" viewBox="0 0 12 13"><rect x="0.7" y="0.7" width="10.6" height="11.6" fill="none" stroke="#fff" stroke-width="1.3"/><rect x="3" y="3" width="6" height="7" fill="#7fd3f5"/><path d="M6.5 5 V10" stroke="#fff" stroke-width="0.8"/></svg>
<div class="t" style="left:243.50px;top:447px;font-size:12.10px;line-height:12.10px;color:#fff;font-weight:normal;letter-spacing:-0.267px;">Doklady</div>
<svg style="position:absolute;left:297px;top:444px;" width="16" height="16" viewBox="0 0 16 16"><path d="M6.5 9.5 L9.5 6.5" stroke="#fff" stroke-width="1.2"/><path d="M5.5 7.5 L3 10 Q1.5 11.5 3 13 Q4.5 14.5 6 13 L8.5 10.5 M7.5 5.5 L10 3 Q11.5 1.5 13 3 Q14.5 4.5 13 6 L10.5 8.5" fill="none" stroke="#fff" stroke-width="1.3"/></svg>
<div class="t" style="left:319.60px;top:448px;font-size:11.94px;line-height:11.94px;color:#fff;font-weight:normal;letter-spacing:-0.445px;">Odkazy</div>
<svg style="position:absolute;left:367px;top:444px;" width="15" height="15" viewBox="0 0 15 15"><path d="M12.5 4 A6 6 0 1 0 12.5 11" fill="none" stroke="#fff" stroke-width="1.3"/><path d="M4.5 7.5 H10.5 M8 5 L10.5 7.5 L8 10" fill="none" stroke="#fff" stroke-width="1.3"/></svg>
<div class="t" style="left:391.00px;top:448px;font-size:11.34px;line-height:11.34px;color:#fff;font-weight:normal;letter-spacing:-0.448px;">Procesy</div>
<div style="left:81px;top:467px;width:824px;height:355px;background:#f0f0f0;border:1px solid #cfcfcf;border-top:none;box-sizing:border-box;"></div>
<div style="left:88px;top:473px;width:810px;height:342px;background:#fcfcfc;border:1px solid #d0d0d0;box-sizing:border-box;"></div>
<div style="left:88px;top:473px;width:810px;height:25px;background:#00adef;"></div>
<svg style="position:absolute;left:92px;top:480px;" width="18" height="16" viewBox="0 0 18 16"><path d="M1 1.5 Q4.5 0 8.5 1.5 V13 Q4.5 12 1 13 Z M8.5 1.5 Q12.5 0 16 1.5 V13 Q12.5 12 8.5 13" fill="none" stroke="#fff" stroke-width="1.3"/><path d="M11 13.5 H15 L13 15.5 Z" fill="#fff"/></svg>
<div class="t" style="left:115.70px;top:480px;font-size:13.68px;line-height:13.68px;color:#fff;font-weight:bold;letter-spacing:-0.413px;">Doklady</div>
<svg style="position:absolute;left:713px;top:476px;" width="22" height="20" viewBox="0 0 22 20"><rect x="5" y="1" width="10" height="5" fill="none" stroke="#fff" stroke-width="1.4"/><path d="M5 14 H1.5 V6.5 H18.5 V14 H15" fill="none" stroke="#fff" stroke-width="1.4"/><rect x="5" y="11" width="10" height="6" fill="none" stroke="#fff" stroke-width="1.4"/><path d="M14 17 H20 L17 20 Z" fill="#fff"/></svg>
<svg style="position:absolute;left:738px;top:476px;" width="20" height="20" viewBox="0 0 20 20"><rect x="1" y="7" width="3.5" height="8" fill="none" stroke="#fff" stroke-width="1.3"/><rect x="6.5" y="9" width="3.5" height="6" fill="none" stroke="#fff" stroke-width="1.3"/><rect x="12" y="2" width="3.5" height="13" fill="none" stroke="#fff" stroke-width="1.3"/><path d="M12 16 H18 L15 19 Z" fill="#fff"/></svg>
<svg style="position:absolute;left:761px;top:476px;" width="20" height="20" viewBox="0 0 20 20"><path d="M8.5 1 L12 2.5 V6.5 L8.5 8 L5 6.5 V2.5 Z M4.5 7.5 L8 9 V13 L4.5 14.5 L1 13 V9 Z M12.5 7.5 L16 9 V13 L12.5 14.5 L9 13 V9 Z" fill="none" stroke="#fff" stroke-width="1.2"/><path d="M13 16 H19 L16 19 Z" fill="#fff"/></svg>
<svg style="position:absolute;left:783px;top:476px;" width="21" height="20" viewBox="0 0 21 20"><rect x="1" y="1" width="4" height="15" fill="none" stroke="#fff" stroke-width="1.3"/><rect x="7" y="1" width="4" height="15" fill="#fff"/><rect x="13" y="1" width="4" height="15" fill="none" stroke="#fff" stroke-width="1.3"/><path d="M13 16 H19 L16 19 Z" fill="#fff"/></svg>
<svg style="position:absolute;left:807px;top:476px;" width="20" height="20" viewBox="0 0 20 20"><rect x="7.3" y="0" width="1.6" height="3" fill="#fff" transform="rotate(0 8 8)"/><rect x="7.3" y="0" width="1.6" height="3" fill="#fff" transform="rotate(30 8 8)"/><rect x="7.3" y="0" width="1.6" height="3" fill="#fff" transform="rotate(60 8 8)"/><rect x="7.3" y="0" width="1.6" height="3" fill="#fff" transform="rotate(90 8 8)"/><rect x="7.3" y="0" width="1.6" height="3" fill="#fff" transform="rotate(120 8 8)"/><rect x="7.3" y="0" width="1.6" height="3" fill="#fff" transform="rotate(150 8 8)"/><rect x="7.3" y="0" width="1.6" height="3" fill="#fff" transform="rotate(180 8 8)"/><rect x="7.3" y="0" width="1.6" height="3" fill="#fff" transform="rotate(210 8 8)"/><rect x="7.3" y="0" width="1.6" height="3" fill="#fff" transform="rotate(240 8 8)"/><rect x="7.3" y="0" width="1.6" height="3" fill="#fff" transform="rotate(270 8 8)"/><rect x="7.3" y="0" width="1.6" height="3" fill="#fff" transform="rotate(300 8 8)"/><rect x="7.3" y="0" width="1.6" height="3" fill="#fff" transform="rotate(330 8 8)"/><circle cx="8" cy="8" r="5.6" fill="none" stroke="#fff" stroke-width="1.4"/><circle cx="8" cy="8" r="2.4" fill="none" stroke="#fff" stroke-width="1.3"/><path d="M13 16 H19 L16 19 Z" fill="#fff"/></svg>
<div style="left:827px;top:474px;width:23px;height:23px;background:#0d9ad4;"></div>
<svg style="position:absolute;left:826.5px;top:473px;" width="24" height="25" viewBox="0 0 24 25"><path d="M16.5 10 V17.5 A4 4 0 0 1 8.5 17.5 V5 A2.5 2.5 0 0 1 13.5 5 V15.5 A1 1 0 0 1 11.5 15.5 V6" fill="none" stroke="#fff" stroke-width="1.3" transform="rotate(45 12.5 12)"/><path d="M16.5 19.5 H22.5 L19.5 22.5 Z" fill="#fff"/></svg>
<svg style="position:absolute;left:855px;top:477px;" width="13" height="17" viewBox="0 0 13 17"><path d="M1 3.5 H12 M4.5 3.5 V1.5 H8.5 V3.5 M2.5 3.5 V15.5 H10.5 V3.5 M5 6 V13 M8 6 V13" fill="none" stroke="#16a0d8" stroke-width="1.3"/></svg>
<div style="left:873px;top:477px;width:1px;height:19px;background:#0b90c8;"></div>
<svg style="position:absolute;left:875px;top:478px;" width="21" height="15" viewBox="0 0 21 15"><path d="M0.5 2.5 H20 M0.5 7.7 H20 M0.5 12.9 H20" stroke="#fff" stroke-width="1.4"/></svg>
<div style="left:89px;top:498px;width:802px;height:20px;background:#f0f0f0;"></div>
<div style="left:89px;top:518px;width:802px;height:1px;background:#d4d4d4;"></div>
<div style="left:890px;top:498px;width:1px;height:21px;background:#d4d4d4;"></div>
<div style="left:115px;top:498px;width:1px;height:20px;background:#d8d8d8;"></div>
<div style="left:498px;top:498px;width:1px;height:20px;background:#d8d8d8;"></div>
<div style="left:631px;top:498px;width:1px;height:20px;background:#d8d8d8;"></div>
<div class="t" style="left:121.50px;top:503px;font-size:12.10px;line-height:12.10px;color:#1f4aa6;font-weight:normal;letter-spacing:-0.284px;">Modul</div>
<div class="t" style="left:504.50px;top:503px;font-size:12.10px;line-height:12.10px;color:#1f4aa6;font-weight:normal;letter-spacing:-0.271px;">Doklad</div>
<div class="t" style="left:637.50px;top:503px;font-size:12.10px;line-height:12.10px;color:#1f4aa6;font-weight:normal;letter-spacing:-0.447px;">Popis</div>
<div style="left:89px;top:643px;width:808px;height:21px;background:#e1e1e1;"></div>
<div class="t" style="left:457.50px;top:649px;font-size:12.10px;line-height:12.10px;color:#000;font-weight:normal;letter-spacing:0.347px;">Žádné údaje</div>
<div style="left:89px;top:788px;width:808px;height:26px;background:#f0f0f0;"></div>
<div style="left:89px;top:788px;width:808px;height:1px;background:#d4d4d4;"></div>
<svg style="position:absolute;left:94px;top:793px;" width="17" height="17" viewBox="0 0 17 17"><polygon points="9.50,15.50 7.50,15.50 7.50,10.23 2.94,12.87 1.94,11.13 6.50,8.50 1.94,5.87 2.94,4.13 7.50,6.77 7.50,1.50 9.50,1.50 9.50,6.77 14.06,4.13 15.06,5.87 10.50,8.50 15.06,11.13 14.06,12.87 9.50,10.23" fill="#f6f6f6" stroke="#1d5fb0" stroke-width="1.35" stroke-linejoin="miter" stroke-miterlimit="10"/></svg>
<div class="t" style="left:118.80px;top:795px;font-size:12.10px;line-height:12.10px;color:#1f4aa6;font-weight:normal;letter-spacing:-0.219px;">0</div>
<div style="left:89px;top:791px;width:1px;height:21px;background:#cfcfcf;"></div>
<div style="left:132px;top:792px;width:1px;height:19px;background:#d6d6d6;"></div>
<div class="t" style="left:139.40px;top:795px;font-size:12.10px;line-height:12.10px;color:#1f4aa6;font-weight:normal;letter-spacing:-0.341px;">Počet záznamů: 0</div>
<div style="left:238px;top:792px;width:1px;height:19px;background:#d6d6d6;"></div>
<div style="left:821px;top:792px;width:1px;height:19px;background:#d6d6d6;"></div>
<div style="left:847px;top:792px;width:1px;height:19px;background:#d6d6d6;"></div>
<svg style="position:absolute;left:828px;top:794px;" width="14" height="14" viewBox="0 0 14 14"><path d="M12 2.5 V1 H1.5 L7 6.5 L1.5 12 H12 V10.5" fill="none" stroke="#1d5fb0" stroke-width="1.6"/></svg>
<svg style="position:absolute;left:853px;top:793px;" width="16" height="16" viewBox="0 0 16 16"><path d="M2 14 L3 10 L11 2 L14 5 L6 13 Z M9.5 3.5 L12.5 6.5 M7 15 H14" fill="none" stroke="#1d5fb0" stroke-width="1.2" stroke-linejoin="round"/></svg>
<svg style="position:absolute;left:874px;top:791px;" width="22" height="21" viewBox="0 0 22 21"><path d="M3 14 V3 H15 M5 16 V5 H17 V10" fill="none" stroke="#1d5fb0" stroke-width="1.2"/><path d="M7 8 H14 M7 11 H12 M7 14 H11" stroke="#1d5fb0" stroke-width="1.1"/><circle cx="16" cy="15.5" r="4.5" fill="#f0f0f0" stroke="#1d5fb0" stroke-width="1.2"/><path d="M16 13 V18 M13.5 15.5 H18.5" stroke="#1d5fb0" stroke-width="1.1"/></svg>
<div style="left:452px;top:182px;width:293px;height:216px;background:rgba(0,0,0,0.18);filter:blur(2px);"></div>
<div style="left:448px;top:178px;width:293px;height:216px;background:#f0f0f0;border:1px solid #a0a0a0;box-sizing:border-box;"></div>
<div class="t" style="left:490.20px;top:190px;font-size:12.10px;line-height:12.10px;color:#000;font-weight:normal;letter-spacing:-0.160px;">ALL: Použít původní</div>
<div class="t" style="left:490.20px;top:220px;font-size:12.10px;line-height:12.10px;color:#000;font-weight:normal;letter-spacing:-0.437px;">DS_DOC: DEMO\DSDOC, Unikátní přesun</div>
<div class="t" style="left:490.20px;top:250px;font-size:12.10px;line-height:12.10px;color:#000;font-weight:normal;letter-spacing:-0.128px;">OFI: Demo\Demands, Unikátní kopie</div>
<div class="t" style="left:490.20px;top:280px;font-size:12.10px;line-height:12.10px;color:#000;font-weight:normal;letter-spacing:-0.224px;">OFO: DEMO\Offers, Unikátní kopie</div>
<div class="t" style="left:490.20px;top:310px;font-size:12.10px;line-height:12.10px;color:#000;font-weight:normal;letter-spacing:-0.352px;">PDFDOC: DEMO\PDFDOC, Použít původní</div>
<div class="t" style="left:490.20px;top:340px;font-size:12.10px;line-height:12.10px;color:#000;font-weight:normal;letter-spacing:-0.265px;">PICTK2: DEMO\Pictures, Použít původní</div>
<div class="t" style="left:490.20px;top:370px;font-size:12.10px;line-height:12.10px;color:#000;font-weight:normal;letter-spacing:-0.180px;">PONP: Použít původní</div>
<div style="left:912px;top:37px;width:3px;height:792px;background:#f0f0f0;"></div>
<div style="left:915px;top:37px;width:7px;height:792px;background:#00adef;"></div>
<div style="left:916.5px;top:421px;width:4px;height:4px;border-radius:2px;background:#5ccaf3"></div>
<div style="left:916.5px;top:430px;width:4px;height:4px;border-radius:2px;background:#5ccaf3"></div>
<div style="left:916.5px;top:439px;width:4px;height:4px;border-radius:2px;background:#5ccaf3"></div>
<div style="left:922px;top:37px;width:3px;height:792px;background:#f8f6f6;"></div>
<div style="left:925px;top:37px;width:224px;height:792px;background:#0052a4;"></div>
<div style="left:1149px;top:37px;width:3px;height:795px;background:#f0f0f0;"></div>
<div style="left:74px;top:828px;width:838px;height:1px;background:#d0d0d0;"></div>
<div style="left:4px;top:829px;width:1148px;height:3px;background:#f0f0f0;"></div>
<div style="left:4px;top:830px;width:1148px;height:2px;background:#f8f8f8;"></div>
<div style="left:0px;top:833px;width:1154px;height:2px;background:#cdcdcd;"></div>
<div class="t" style="left:931.80px;top:51px;font-size:19.00px;line-height:19.00px;color:#fff;font-weight:normal;letter-spacing:-0.028px;">AB Group</div>
<svg style="position:absolute;left:1125px;top:49.5px;" width="15" height="15" viewBox="0 0 15 15"><path d="M6 5.5 H2.75 V13.25 H10 V10" fill="none" stroke="#fff" stroke-width="1.5"/><path d="M6.5 1.75 H13.25 V8.5" fill="none" stroke="#fff" stroke-width="1.5"/><path d="M6 10 L11.2 4.8" stroke="#fff" stroke-width="1.5"/><path d="M12.6 3.4 L8.3 4.1 L11.9 7.7 Z" fill="#fff"/></svg>
<div style="left:928px;top:82px;width:218px;height:25px;background:#00adef;"></div>
<div style="left:928px;top:107px;width:218px;height:146px;background:#fcfcfc;"></div>
<div style="left:1121px;top:84px;width:1px;height:21px;background:#0a90c8;"></div>
<svg style="position:absolute;left:1126.5px;top:91px;" width="14" height="8" viewBox="0 0 14 8"><path d="M1 7 L7 1 L13 7" fill="none" stroke="#fff" stroke-width="1.3"/></svg>
<div class="t" style="left:932.80px;top:90px;font-size:13.68px;line-height:13.68px;color:#fff;font-weight:bold;letter-spacing:-0.322px;">Základní informace</div>
<div class="t" style="left:935.40px;top:115px;font-size:12.10px;line-height:12.10px;color:#1f4aa6;font-weight:normal;letter-spacing:-0.361px;">Firma:</div>
<div class="t" style="left:1088.20px;top:115px;font-size:12.10px;line-height:12.10px;color:#000;font-weight:normal;letter-spacing:-0.347px;">AB Group</div>
<div style="left:935px;top:128px;width:204px;height:1px;background:#e4e4e4;"></div>
<div class="t" style="left:935.40px;top:137px;font-size:12.10px;line-height:12.10px;color:#1f4aa6;font-weight:normal;letter-spacing:-0.246px;">Zkratka:</div>
<div class="t" style="left:1081.80px;top:138px;font-size:11.42px;line-height:11.42px;color:#000;font-weight:normal;letter-spacing:-0.440px;">AB GROUP</div>
<div style="left:935px;top:150px;width:204px;height:1px;background:#e4e4e4;"></div>
<div class="t" style="left:935.40px;top:160px;font-size:11.82px;line-height:11.82px;color:#1f4aa6;font-weight:normal;letter-spacing:-0.445px;">IČO:</div>
<div class="t" style="left:1090.90px;top:160px;font-size:11.51px;line-height:11.51px;color:#000;font-weight:normal;letter-spacing:-0.441px;">32614888</div>
<div style="left:935px;top:172px;width:204px;height:1px;background:#e4e4e4;"></div>
<div class="t" style="left:935.40px;top:182px;font-size:11.40px;line-height:11.40px;color:#1f4aa6;font-weight:normal;letter-spacing:-0.445px;">DIČ:</div>
<div class="t" style="left:1076.30px;top:182px;font-size:11.53px;line-height:11.53px;color:#000;font-weight:normal;letter-spacing:-0.442px;">CZ32614888</div>
<div style="left:935px;top:194px;width:204px;height:1px;background:#e4e4e4;"></div>
<div class="t" style="left:935.40px;top:203px;font-size:12.10px;line-height:12.10px;color:#1f4aa6;font-weight:normal;letter-spacing:-0.303px;">Daňové číslo:</div>
<div style="left:935px;top:216px;width:204px;height:1px;background:#e4e4e4;"></div>
<div style="left:928px;top:259px;width:218px;height:25px;background:#00adef;"></div>
<div style="left:928px;top:284px;width:218px;height:163px;background:#fcfcfc;"></div>
<div style="left:1121px;top:261px;width:1px;height:21px;background:#0a90c8;"></div>
<svg style="position:absolute;left:1126.5px;top:268px;" width="14" height="8" viewBox="0 0 14 8"><path d="M1 7 L7 1 L13 7" fill="none" stroke="#fff" stroke-width="1.3"/></svg>
<div class="t" style="left:932.80px;top:265px;font-size:13.68px;line-height:13.68px;color:#fff;font-weight:bold;letter-spacing:-0.438px;">Mapa</div>
<svg style="position:absolute;left:1100px;top:265px;" width="20" height="13" viewBox="0 0 20 13"><path d="M5 1.2 H19.5 M5 6.5 H19.5 M5 11.8 H19.5" stroke="#fff" stroke-width="1.3"/><rect x="0.5" y="0.5" width="1.5" height="1.5" fill="#fff"/><rect x="0.5" y="5.8" width="1.5" height="1.5" fill="#fff"/><rect x="0.5" y="11" width="1.5" height="1.5" fill="#fff"/></svg>
<div class="t" style="left:942.50px;top:292px;font-size:12.10px;line-height:12.10px;color:#000;font-weight:normal;letter-spacing:-0.113px;">Chybí google api key v parametr</div>
<div style="left:1103px;top:290px;width:12px;height:16px;background:linear-gradient(to right, rgba(252,252,252,0), #fcfcfc);"></div>
<div class="t" style="left:1008.40px;top:306px;font-size:12.10px;line-height:12.10px;color:#000;font-weight:normal;letter-spacing:-0.057px;">mandanta.</div>
<svg style="position:absolute;left:1119px;top:294.5px;" width="15" height="15" viewBox="0 0 15 15"><path d="M6 5.5 H2.75 V13.25 H10 V10" fill="none" stroke="#000" stroke-width="1.5"/><path d="M6.5 1.75 H13.25 V8.5" fill="none" stroke="#000" stroke-width="1.5"/><path d="M6 10 L11.2 4.8" stroke="#000" stroke-width="1.5"/><path d="M12.6 3.4 L8.3 4.1 L11.9 7.7 Z" fill="#000"/></svg>
<div style="left:928px;top:453px;width:218px;height:24px;background:#00adef;"></div>
<div style="left:928px;top:477px;width:218px;height:73px;background:#fcfcfc;"></div>
<div style="left:1121px;top:455px;width:1px;height:20px;background:#0a90c8;"></div>
<svg style="position:absolute;left:1126.5px;top:462px;" width="14" height="8" viewBox="0 0 14 8"><path d="M1 7 L7 1 L13 7" fill="none" stroke="#fff" stroke-width="1.3"/></svg>
<div class="t" style="left:932.80px;top:460px;font-size:13.42px;line-height:13.42px;color:#fff;font-weight:bold;letter-spacing:-0.443px;">Registry</div>
<svg style="position:absolute;left:1100px;top:458px;" width="20" height="18" viewBox="0 0 20 18"><circle cx="9" cy="8.5" r="7.5" fill="none" stroke="#fff" stroke-width="1.3"/><path d="M5 8.5 L8 11.5 L13.5 5.5" fill="none" stroke="#fff" stroke-width="1.3"/><path d="M12 15 H18 L15 18 Z" fill="#fff"/></svg>
<div class="t" style="left:944.50px;top:486px;font-size:12.10px;line-height:12.10px;color:#1f4aa6;font-weight:bold;letter-spacing:-0.443px;">DIČ</div>
<div class="t" style="left:982.50px;top:486px;font-size:12.10px;line-height:12.10px;color:#1f4aa6;font-weight:bold;letter-spacing:-0.377px;">DPH</div>
<div class="t" style="left:1019.50px;top:486px;font-size:12.10px;line-height:12.10px;color:#1f4aa6;font-weight:bold;letter-spacing:-0.290px;">Credit</div>
<div class="t" style="left:1065.40px;top:486px;font-size:12.10px;line-height:12.10px;color:#1f4aa6;font-weight:bold;letter-spacing:-0.279px;">ISIR</div>
<div style="left:1098px;top:484px;width:39px;height:16px;overflow:hidden;"><div class="t" style="left:-6px;top:1.5px;font-size:11.5px;line-height:11.5px;color:#1f4aa6;font-weight:bold;">OR a ŽR</div></div>
<svg style="position:absolute;left:933.9px;top:501.20000000000005px;" width="40" height="40" viewBox="0 0 40 40"><circle cx="20" cy="20" r="19" fill="#7f8588"/><path d="M12 12 L28 28 M28 12 L12 28" stroke="#fff" stroke-width="2"/></svg>
<svg style="position:absolute;left:974.8px;top:501.20000000000005px;" width="40" height="40" viewBox="0 0 40 40"><circle cx="20" cy="20" r="19" fill="#7f8588"/><path d="M14.5 15 Q14.5 9.5 20 9.5 Q25.5 9.5 25.5 14.5 Q25.5 18 20.5 20 V24" fill="none" stroke="#fff" stroke-width="2.2"/><rect x="19" y="27.5" width="3" height="3" fill="#fff"/></svg>
<svg style="position:absolute;left:1015.7px;top:501.20000000000005px;" width="40" height="40" viewBox="0 0 40 40"><circle cx="20" cy="20" r="19" fill="#7f8588"/><path d="M14.5 15 Q14.5 9.5 20 9.5 Q25.5 9.5 25.5 14.5 Q25.5 18 20.5 20 V24" fill="none" stroke="#fff" stroke-width="2.2"/><rect x="19" y="27.5" width="3" height="3" fill="#fff"/></svg>
<svg style="position:absolute;left:1057px;top:501.20000000000005px;" width="40" height="40" viewBox="0 0 40 40"><circle cx="20" cy="20" r="19" fill="#f05a5a"/><path d="M12 12 L28 28 M28 12 L12 28" stroke="#fff" stroke-width="2"/></svg>
<svg style="position:absolute;left:1098px;top:501.20000000000005px;" width="40" height="40" viewBox="0 0 40 40"><circle cx="20" cy="20" r="17.3" fill="none" stroke="#c3c3c3" stroke-width="3.2"/></svg>
<div style="left:928px;top:557px;width:218px;height:24px;background:#00adef;"></div>
<div style="left:928px;top:581px;width:218px;height:137px;background:#fcfcfc;"></div>
<div style="left:1121px;top:559px;width:1px;height:20px;background:#0a90c8;"></div>
<svg style="position:absolute;left:1126.5px;top:566px;" width="14" height="8" viewBox="0 0 14 8"><path d="M1 7 L7 1 L13 7" fill="none" stroke="#fff" stroke-width="1.3"/></svg>
<div class="t" style="left:932.80px;top:564px;font-size:13.39px;line-height:13.39px;color:#fff;font-weight:bold;letter-spacing:-0.442px;">Elektronické adresy</div>
<div class="t" style="left:935.70px;top:590px;font-size:12.10px;line-height:12.10px;color:#1f4aa6;font-weight:normal;letter-spacing:-0.138px;">Telefon</div>
<div class="t" style="left:1085.80px;top:591px;font-size:11.34px;line-height:11.34px;color:#1e9fe0;font-weight:normal;letter-spacing:-0.441px;">596321321</div>
<div class="t" style="left:935.70px;top:611px;font-size:12.10px;line-height:12.10px;color:#1f4aa6;font-weight:normal;letter-spacing:0.282px;">Mobil</div>
<div class="t" style="left:1085.40px;top:612px;font-size:11.42px;line-height:11.42px;color:#1e9fe0;font-weight:normal;letter-spacing:-0.444px;">606652652</div>
<div class="t" style="left:935.70px;top:632px;font-size:12.10px;line-height:12.10px;color:#1f4aa6;font-weight:normal;letter-spacing:0.046px;">e-mail</div>
<div class="t" style="left:1056.60px;top:632px;font-size:12.10px;line-height:12.10px;color:#1e9fe0;font-weight:normal;letter-spacing:-0.278px;">abgroup@ab.cz</div>
<div class="t" style="left:935.70px;top:653px;font-size:12.10px;line-height:12.10px;color:#1f4aa6;font-weight:normal;letter-spacing:0.032px;">www</div>
<div class="t" style="left:1050.30px;top:653px;font-size:12.10px;line-height:12.10px;color:#1e9fe0;font-weight:normal;letter-spacing:-0.035px;">www.abgroup.cz</div>
<div style="left:928px;top:725px;width:218px;height:25px;background:#00adef;"></div>
<div style="left:928px;top:750px;width:218px;height:49px;background:#fcfcfc;"></div>
<div style="left:1121px;top:727px;width:1px;height:21px;background:#0a90c8;"></div>
<svg style="position:absolute;left:1126.5px;top:734px;" width="14" height="8" viewBox="0 0 14 8"><path d="M1 7 L7 1 L13 7" fill="none" stroke="#fff" stroke-width="1.3"/></svg>
<div class="t" style="left:932.80px;top:731px;font-size:13.68px;line-height:13.68px;color:#fff;font-weight:bold;letter-spacing:-0.430px;">Ostatní údaje</div>
<div class="t" style="left:935.50px;top:758px;font-size:12.10px;line-height:12.10px;color:#1f4aa6;font-weight:normal;letter-spacing:-0.039px;">Vytvořil:</div>
<div class="t" style="left:1039.20px;top:758px;font-size:11.75px;line-height:11.75px;color:#1f4aa6;font-weight:normal;letter-spacing:-0.446px;">00.00.0000 00:00:00</div>
<div class="t" style="left:935.50px;top:779px;font-size:12.10px;line-height:12.10px;color:#1f4aa6;font-weight:normal;letter-spacing:-0.120px;">Změnil:</div>
<div class="t" style="left:979.10px;top:780px;font-size:11.29px;line-height:11.29px;color:#000;font-weight:normal;letter-spacing:-0.443px;">K2ATMITEC</div>
<div class="t" style="left:1042.70px;top:779px;font-size:11.78px;line-height:11.78px;color:#1f4aa6;font-weight:normal;letter-spacing:-0.444px;">01.06.2020 12:07:...</div>
</body></html>
